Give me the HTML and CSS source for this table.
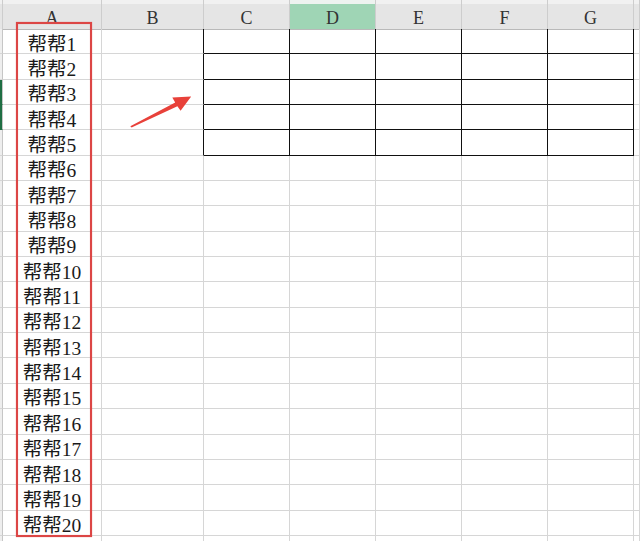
FILE: index.html
```html
<!DOCTYPE html>
<html lang="zh">
<head>
<meta charset="utf-8">
<link rel="stylesheet" href="styles.css">
</head>
<body>
<div class="sheet">
  <div class="row head">
    <i class="rh"></i><div class="h">A</div><div class="h">B</div><div class="h">C</div><div class="h on">D</div><div class="h">E</div><div class="h">F</div><div class="h">G</div><div class="h"></div>
  </div>
  <div class="row t"><i class="rh"></i><div class="a">帮帮1</div><i class="b"></i><i class="c"></i><i class="c"></i><i class="c"></i><i class="c"></i><i class="c"></i><i></i></div>
  <div class="row t"><i class="rh"></i><div class="a">帮帮2</div><i class="b"></i><i class="c"></i><i class="c"></i><i class="c"></i><i class="c"></i><i class="c"></i><i></i></div>
  <div class="row t"><i class="rh sel"></i><div class="a">帮帮3</div><i class="b"></i><i class="c"></i><i class="c"></i><i class="c"></i><i class="c"></i><i class="c"></i><i></i></div>
  <div class="row t"><i class="rh sel"></i><div class="a">帮帮4</div><i class="b"></i><i class="c"></i><i class="c"></i><i class="c"></i><i class="c"></i><i class="c"></i><i></i></div>
  <div class="row t"><i class="rh"></i><div class="a">帮帮5</div><i class="b"></i><i class="c"></i><i class="c"></i><i class="c"></i><i class="c"></i><i class="c"></i><i></i></div>
  <div class="row"><i class="rh"></i><div class="a">帮帮6</div><i></i><i></i><i></i><i></i><i></i><i></i><i></i></div>
  <div class="row"><i class="rh"></i><div class="a">帮帮7</div><i></i><i></i><i></i><i></i><i></i><i></i><i></i></div>
  <div class="row"><i class="rh"></i><div class="a">帮帮8</div><i></i><i></i><i></i><i></i><i></i><i></i><i></i></div>
  <div class="row"><i class="rh"></i><div class="a">帮帮9</div><i></i><i></i><i></i><i></i><i></i><i></i><i></i></div>
  <div class="row"><i class="rh"></i><div class="a">帮帮10</div><i></i><i></i><i></i><i></i><i></i><i></i><i></i></div>
  <div class="row"><i class="rh"></i><div class="a">帮帮11</div><i></i><i></i><i></i><i></i><i></i><i></i><i></i></div>
  <div class="row"><i class="rh"></i><div class="a">帮帮12</div><i></i><i></i><i></i><i></i><i></i><i></i><i></i></div>
  <div class="row"><i class="rh"></i><div class="a">帮帮13</div><i></i><i></i><i></i><i></i><i></i><i></i><i></i></div>
  <div class="row"><i class="rh"></i><div class="a">帮帮14</div><i></i><i></i><i></i><i></i><i></i><i></i><i></i></div>
  <div class="row"><i class="rh"></i><div class="a">帮帮15</div><i></i><i></i><i></i><i></i><i></i><i></i><i></i></div>
  <div class="row"><i class="rh"></i><div class="a">帮帮16</div><i></i><i></i><i></i><i></i><i></i><i></i><i></i></div>
  <div class="row"><i class="rh"></i><div class="a">帮帮17</div><i></i><i></i><i></i><i></i><i></i><i></i><i></i></div>
  <div class="row"><i class="rh"></i><div class="a">帮帮18</div><i></i><i></i><i></i><i></i><i></i><i></i><i></i></div>
  <div class="row"><i class="rh"></i><div class="a">帮帮19</div><i></i><i></i><i></i><i></i><i></i><i></i><i></i></div>
  <div class="row"><i class="rh"></i><div class="a">帮帮20</div><i></i><i></i><i></i><i></i><i></i><i></i><i></i></div>
  <div class="row"><i class="rh"></i><div class="a"></div><i></i><i></i><i></i><i></i><i></i><i></i><i></i></div>

  <div class="box"></div>
  <svg class="arrow" viewBox="128 92 68 38" width="68" height="38" aria-hidden="true">
    <polygon points="130.3,126.3 175.2,102.6 172.3,97.4 191.2,96.4 180.6,110.8 177.4,106.2 131.6,127.6" fill="#e8413a"/>
  </svg>
</div>
</body>
</html>
```

FILE: styles.css
```css
html, body {
  margin: 0;
  padding: 0;
  background: #fff;
}

.sheet {
  position: relative;
  width: 640px;
  height: 541px;
  overflow: hidden;
  font-family: "Liberation Serif", "Noto Sans CJK SC", serif;
  color: #1a1a1a;
}

.row {
  display: grid;
  grid-template-columns: 3px 99px 102px 86px 86px 86px 86px 86px 6px;
  height: 25.35px;
}

.row > * {
  display: block;
  box-sizing: border-box;
  border-right: 1px solid #d6d6d6;
  border-bottom: 1px solid #d6d6d6;
}

.row.head {
  height: 29px;
}

.row.head > * {
  background: linear-gradient(#f1f1f1 0 4px, #e5e5e5 4px);
  border-right-color: #cdcdcd;
  border-bottom-color: #b9b9b9;
}

.h {
  display: flex;
  align-items: center;
  justify-content: center;
  padding-top: 8px;
  font-size: 18px;
  color: #333;
}

.row.head > .h.on {
  background: linear-gradient(#eef3f0 0 4px, #9fd5b5 4px);
}

.rh {
  background: #eeeeee;
  border-right-color: #c6c6c6;
}

.rh.sel {
  background: #1f6e43;
  border-bottom-color: #1f6e43;
}

.a {
  display: flex;
  align-items: center;
  justify-content: center;
  padding-top: 2px;
  font-size: 19.5px;
  white-space: nowrap;
  overflow: hidden;
}

.row.t .b {
  border-right-color: #111;
}

.row.t .c {
  border-right-color: #111;
  border-bottom-color: #111;
}

.box {
  position: absolute;
  left: 16px;
  top: 22px;
  width: 76px;
  height: 515px;
  box-sizing: border-box;
  border: 2px solid #dc4645;
  box-shadow: 0 0 1px rgba(220, 70, 70, 0.6), inset 0 0 1px rgba(220, 70, 70, 0.6);
}

.arrow {
  position: absolute;
  left: 128px;
  top: 92px;
  display: block;
}
```
